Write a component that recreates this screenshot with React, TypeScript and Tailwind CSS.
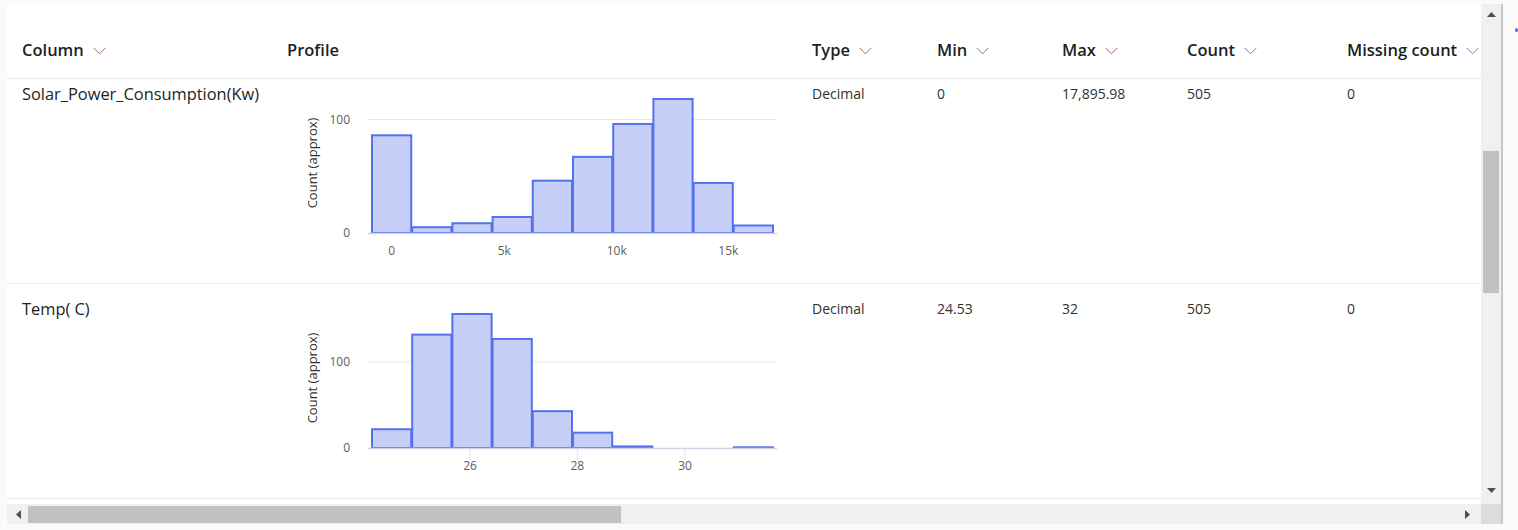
import React from 'react';

type Tick = { label: string; x: number };

interface HistogramProps {
  counts: number[];
  ticks: Tick[];
  showTicks?: boolean;
}

// geometry is relative to the row top and the Profile cell's left edge
const BIN_LEFT = 84;
const BIN_WIDTH = 40.2;
const BASELINE = 164;
const PLOT_HEIGHT = 135;

const Histogram: React.FC<HistogramProps> = ({ counts, ticks, showTicks = false }) => {
  const max = Math.max(...counts);
  const scale = PLOT_HEIGHT / max;
  const y100 = BASELINE - 100 * scale;
  return (
    <svg width={500} height={200} className="block" style={{ fontFamily: "'Open Sans', sans-serif" }}>
      <line x1={81} x2={490} y1={y100} y2={y100} stroke="#e6e6e6" strokeWidth={1} />
      {showTicks &&
        ticks.map((t) => <line key={t.label} x1={t.x} x2={t.x} y1={BASELINE} y2={BASELINE + 13} stroke="#e1e3ea" />)}
      {counts.map((c, i) => {
        if (c <= 0) return null;
        const h = c * scale;
        return (
          <rect
            key={i}
            x={BIN_LEFT + i * BIN_WIDTH + 1}
            y={BASELINE - h + 1}
            width={BIN_WIDTH - 1}
            height={Math.max(h - 1, 0.5)}
            fill="#c6cff8"
            stroke="#5572ee"
            strokeWidth={2}
          />
        );
      })}
      <line x1={81} x2={490} y1={BASELINE + 0.5} y2={BASELINE + 0.5} stroke="#cfd4e6" strokeWidth={1.5} />
      <text x={63} y={y100 + 4} textAnchor="end" fontSize={12} fill="#605e5c">
        100
      </text>
      <text x={63} y={BASELINE + 4} textAnchor="end" fontSize={12} fill="#605e5c">
        0
      </text>
      <text
        x={0}
        y={0}
        transform={`translate(30 ${BASELINE - 70}) rotate(-90)`}
        textAnchor="middle"
        fontSize={13}
        fill="#323130"
      >
        Count (approx)
      </text>
      {ticks.map((t) => (
        <text key={t.label} x={t.x} y={BASELINE + 22} textAnchor="middle" fontSize={12} fill="#605e5c">
          {t.label}
        </text>
      ))}
    </svg>
  );
};

const Chevron: React.FC<{ color: string }> = ({ color }) => (
  <svg width={13} height={8} viewBox="0 0 13 8" className="ml-[9px] mt-[1px]">
    <polyline points="0.5,0.8 6.5,6.8 12.5,0.8" fill="none" stroke={color} strokeWidth={1} />
  </svg>
);

const BROWN = '#9a6b5e';
const BLUE = '#5b83c9';

const headers: { label: string; chevron?: string }[] = [
  { label: 'Column', chevron: BROWN },
  { label: 'Profile' },
  { label: 'Type', chevron: BROWN },
  { label: 'Min', chevron: BROWN },
  { label: 'Max', chevron: BROWN },
  { label: 'Count', chevron: BLUE },
  { label: 'Missing count', chevron: BLUE },
];

const GRID = 'grid grid-cols-[265px_525px_125px_125px_125px_160px_220px]';

interface RowData {
  name: string;
  counts: number[];
  ticks: Tick[];
  showTicks?: boolean;
  type: string;
  min: string;
  max: string;
  count: string;
  missing: string;
}

const rows: RowData[] = [
  {
    name: 'Solar_Power_Consumption(Kw)',
    counts: [87, 6, 9.5, 15, 47, 68, 97, 119, 45, 7.5],
    ticks: [
      { label: '0', x: 104.7 },
      { label: '5k', x: 217.3 },
      { label: '10k', x: 329.7 },
      { label: '15k', x: 441.3 },
    ],
    type: 'Decimal',
    min: '0',
    max: '17,895.98',
    count: '505',
    missing: '0',
  },
  {
    name: 'Temp( C)',
    counts: [23, 133, 157, 128, 44, 19, 3, 0, 0, 2],
    ticks: [
      { label: '26', x: 183 },
      { label: '28', x: 290.3 },
      { label: '30', x: 398 },
    ],
    showTicks: true,
    type: 'Decimal',
    min: '24.53',
    max: '32',
    count: '505',
    missing: '0',
  },
];

const Cell: React.FC<{ children: React.ReactNode }> = ({ children }) => (
  <div className="pt-[15px] text-[14px] leading-[20px] text-[#323130] whitespace-nowrap">{children}</div>
);

const Triangle: React.FC<{ dir: 'up' | 'down' | 'left' | 'right' }> = ({ dir }) => {
  const pts = {
    up: '0,5 4.5,0 9,5',
    down: '0,0 9,0 4.5,5',
    left: '5,0 5,9 0,4.5',
    right: '0,0 0,9 5,4.5',
  }[dir];
  const vertical = dir === 'up' || dir === 'down';
  return (
    <svg width={vertical ? 9 : 5} height={vertical ? 5 : 9}>
      <polygon points={pts} fill="#505050" />
    </svg>
  );
};

const App: React.FC = () => {
  return (
    <div
      className="w-[1518px] h-[530px] bg-[#fafafa] flex overflow-hidden"
      style={{ fontFamily: "'Segoe UI', 'Open Sans', sans-serif" }}
    >
      <div className="pl-[7px] pt-[4px] flex flex-col">
        <div className="flex h-[500px]">
          {/* table */}
          <div className="w-[1474px] h-[500px] bg-white overflow-hidden flex flex-col">
            <div className={`${GRID} h-[75px] border-b border-[#edebe9] pl-[15px] shrink-0`}>
              {headers.map((h) => (
                <div
                  key={h.label}
                  className="flex items-center pt-[35px] pb-[17px] text-[16.5px] leading-[22px] font-semibold text-[#201f1e] whitespace-nowrap"
                >
                  {h.label}
                  {h.chevron && <Chevron color={h.chevron} />}
                </div>
              ))}
            </div>
            <div className="flex-1 overflow-hidden">
              <div className="-mt-[10px]">
                {rows.map((r) => (
                  <div key={r.name} className={`${GRID} h-[215px] border-b border-[#edebe9] pl-[15px]`}>
                    <div className="pt-[14px] text-[16.4px] leading-[22px] text-[#201f1e] whitespace-nowrap">
                      {r.name}
                    </div>
                    <div>
                      <Histogram counts={r.counts} ticks={r.ticks} showTicks={r.showTicks} />
                    </div>
                    <Cell>{r.type}</Cell>
                    <Cell>{r.min}</Cell>
                    <Cell>{r.max}</Cell>
                    <Cell>{r.count}</Cell>
                    <Cell>{r.missing}</Cell>
                  </div>
                ))}
              </div>
            </div>
          </div>
          {/* vertical scrollbar */}
          <div className="w-[20px] h-[500px] bg-[#f0f0f0] flex flex-col items-center">
            <div className="h-[20px] flex items-center justify-center">
              <Triangle dir="up" />
            </div>
            <div className="flex-1 w-full px-[2px]">
              <div className="mt-[127px] h-[142px] bg-[#c1c1c1]" />
            </div>
            <div className="h-[24px] flex items-center justify-center pb-[4px]">
              <Triangle dir="down" />
            </div>
          </div>
        </div>
        {/* horizontal scrollbar */}
        <div className="flex h-[20px]">
          <div className="w-[1474px] bg-[#f0f0f0] flex items-center">
            <div className="w-[21px] flex justify-center pl-[2px]">
              <Triangle dir="left" />
            </div>
            <div className="w-[593px] h-[17px] bg-[#c1c1c1]" />
            <div className="flex-1" />
            <div className="w-[21px] flex justify-center pr-[6px]">
              <Triangle dir="right" />
            </div>
          </div>
          <div className="w-[20px] bg-[#dcdcdc]" />
        </div>
      </div>
      <div className="w-[2px] mt-[4px] h-[520px] bg-[#c8c8c8]" />
      <div className="flex-1 pt-[28px] flex justify-end">
        <div className="w-[3px] h-[4px] rounded-full bg-[#5b6fe0]" />
      </div>
    </div>
  );
};

export default App;
